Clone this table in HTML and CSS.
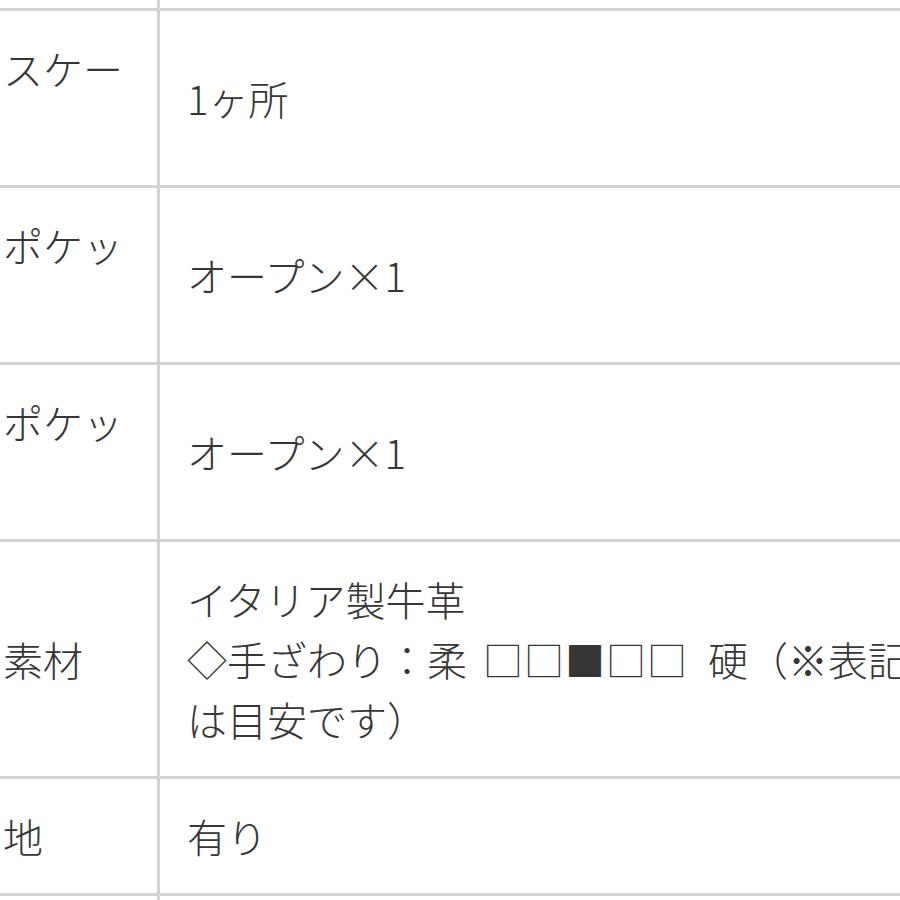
FILE: index.html
```html
<!DOCTYPE html>
<html lang="ja">
<head>
<meta charset="utf-8">
<title>仕様</title>
<link rel="stylesheet" href="styles.css">
</head>
<body>
<table class="spec">
  <tbody>
    <tr class="stub"><th class="label"></th><td class="value"></td></tr>
    <tr>
      <th class="label">スケー<br>&nbsp;</th>
      <td class="value">1ヶ所</td>
    </tr>
    <tr>
      <th class="label">ポケッ<br>&nbsp;</th>
      <td class="value">オープン×1</td>
    </tr>
    <tr>
      <th class="label">ポケッ<br>&nbsp;</th>
      <td class="value">オープン×1</td>
    </tr>
    <tr>
      <th class="label">素材</th>
      <td class="value">イタリア製牛革<br>◇手ざわり：柔<span class="scale">□□■□□</span>硬（※表記は目安です）</td>
    </tr>
    <tr>
      <th class="label">地</th>
      <td class="value">有り</td>
    </tr>
    <tr class="stub"><th class="label"></th><td class="value"></td></tr>
  </tbody>
</table>
</body>
</html>
```
FILE: styles.css
```css
html, body {
  margin: 0;
  padding: 0;
  background: #ffffff;
  overflow: hidden;
  width: 900px;
  height: 900px;
}

.spec {
  border-collapse: separate;
  border-spacing: 0;
  table-layout: fixed;
  width: 1000px;
  font-family: "Noto Sans CJK JP", "Noto Sans", sans-serif;
  font-size: 40px;
  font-weight: 300;
  line-height: 60px;
  color: #363636;
}

.label {
  width: 160px;
  box-sizing: border-box;
  padding: 27px 0 27px 3px;
  text-align: left;
  font-weight: 300;
  vertical-align: middle;
  white-space: nowrap;
  overflow: hidden;
  border-right: 3px solid #d2d2d2;
  border-bottom: 3px solid #d2d2d2;
}

.value {
  padding: 27px 72px 27px 27px;
  vertical-align: middle;
  border-bottom: 3px solid #d2d2d2;
}

.scale {
  margin: 0 20px 0 16px;
  letter-spacing: 1px;
}

.stub .label,
.stub .value {
  padding: 0;
  height: 8px;
  line-height: 8px;
  font-size: 0;
}
```
